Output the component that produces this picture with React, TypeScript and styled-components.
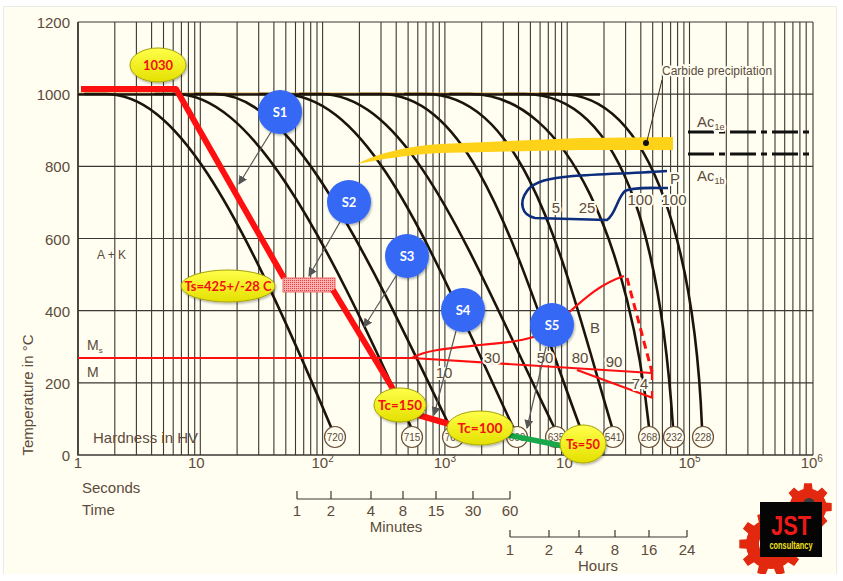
import React from 'react'
import styled, { createGlobalStyle } from 'styled-components'

type Pt = [number, number]

const CREAM = '#fffef1'
const INK = '#5c4b3c'

const GlobalStyle = createGlobalStyle`
    html, body {
        margin: 0;
        padding: 0;
        background: #ffffff;
    }
`

const Frame = styled.div`
    position: relative;
    width: 832px;
    height: 567px;
    margin: 7px 0 0 4px;
    background: ${CREAM};
    box-shadow: 0 0 0 1px #ebebe6;
    overflow: visible;
`

const Chart = styled.svg`
    display: block;
`

const LogoBadge = styled.svg`
    position: absolute;
    left: 732px;
    top: 471px;
    overflow: visible;
`

const Txt = styled.text<{ $size?: number; $anchor?: string }>`
    font-family: "Liberation Sans", Arial, Helvetica, sans-serif;
    font-size: ${p => p.$size ?? 15}px;
    fill: ${INK};
    text-anchor: ${p => p.$anchor ?? 'start'};
`

const Halo = styled(Txt)`
    paint-order: stroke;
    stroke: ${CREAM};
    stroke-width: 4px;
    stroke-linejoin: round;
`

const Tag = styled.text`
    font-family: "Lato", "Liberation Sans", Arial, sans-serif;
    font-weight: 700;
    font-size: 14px;
    fill: #f21010;
    text-anchor: middle;
`

const BubbleLabel = styled.text`
    font-family: "Lato", "Liberation Sans", Arial, sans-serif;
    font-weight: 700;
    font-size: 13px;
    fill: #ffffff;
    text-anchor: middle;
`

const Grid = styled.path<{ $w?: number }>`
    fill: none;
    stroke: #3b3833;
    stroke-width: ${p => p.$w ?? 1}px;
`

const Curve = styled.path`
    fill: none;
    stroke: #1c140b;
    stroke-width: 2.6px;
    stroke-linecap: round;
`

const RedLine = styled.path<{ $w?: number; $dash?: string }>`
    fill: none;
    stroke: #ff1010;
    stroke-width: ${p => p.$w ?? 2.2}px;
    stroke-dasharray: ${p => p.$dash ?? 'none'};
    stroke-linejoin: round;
`

const Pointer = styled.path`
    fill: none;
    stroke: #58585a;
    stroke-width: 1.2px;
`

const Oval = styled.ellipse`
    fill: url(#yellowFill);
    stroke: #a6a30e;
    stroke-width: 1px;
    filter: url(#softShadow);
`

const Bubble = styled.circle`
    fill: #3468f5;
    filter: url(#softShadow);
`

const HvRing = styled.circle`
    fill: ${CREAM};
    stroke: #6a5138;
    stroke-width: 1.2px;
`

const X0 = 78
const DEC = 122.3
const lx = (t: number) => X0 + Math.log10(t) * DEC
const ty = (T: number) => 455 - T * 0.3608

// each cooling curve: leaves the 1000 line at x0, handles at x1 / (x2, y2), lands on its ring at xe
const coolingCurves: [number, number, number, number, number][] = [
    [105, 175, 234, 197, 331],
    [175, 250, 320, 225, 411],
    [215, 290, 360, 240, 450],
    [280, 370, 428, 245, 513],
    [320, 410, 470, 255, 554],
    [380, 475, 518, 260, 580],
    [425, 528, 565, 270, 612],
    [470, 570, 630, 250, 649],
    [525, 630, 662, 265, 673],
    [560, 655, 695, 260, 702],
]

const hardness: [number, string][] = [
    [335, '720'], [412, '715'], [453, '705'], [517, '660'], [556, '635'],
    [580, ''], [613, '541'], [649, '268'], [674, '232'], [703, '228'],
]

const zoneLabels: { x: number; y: number; t: string }[] = [
    { x: 556, y: 213, t: '5' },
    { x: 587, y: 213, t: '25' },
    { x: 640, y: 205, t: '100' },
    { x: 674, y: 205, t: '100' },
    { x: 675, y: 184, t: 'P' },
    { x: 595, y: 333, t: 'B' },
    { x: 492, y: 363, t: '30' },
    { x: 545, y: 363, t: '50' },
    { x: 580, y: 363, t: '80' },
    { x: 614, y: 367, t: '90' },
    { x: 444, y: 378, t: '10' },
    { x: 640, y: 389, t: '74' },
]

const callouts = [
    { cx: 158, cy: 65, rx: 28, ry: 17, label: '1030', len: 30 },
    { cx: 228, cy: 286, rx: 47, ry: 16, label: 'Ts=425+/-28 C', len: 87 },
    { cx: 400, cy: 405, rx: 26, ry: 17, label: 'Tc=150', len: 44 },
    { cx: 480, cy: 428, rx: 33, ry: 17, label: 'Tc=100', len: 45 },
    { cx: 583, cy: 444, rx: 23, ry: 19, label: 'Ts=50', len: 34 },
]

const bubbles: [number, number, string][] = [
    [280, 112, 'S1'], [349, 202, 'S2'], [407, 256, 'S3'], [463, 310, 'S4'], [552, 325, 'S5'],
]

const pointers = [
    'M271,132 L239,184',
    'M340,222 L309,276',
    'M396,276 L364,327',
    'M456,331 L434,415',
    'M546,347 L527,428',
]

const minuteTicks: [number, string][] = [
    [297, '1'], [331, '2'], [371, '4'], [403, '8'], [436, '15'], [473, '30'], [510, '60'],
]
const hourTicks: [number, string][] = [
    [510, '1'], [549, '2'], [579, '4'], [615, '8'], [649, '16'], [687, '24'],
]

const gearPath = (cx: number, cy: number, rt: number, rr: number, n: number, hole: number) => {
    const h = Math.PI / n
    const pts: Pt[] = []
    for (let i = 0; i < n; i++) {
        const a = (i / n) * Math.PI * 2
        const seq: [number, number][] = [
            [a - 0.62 * h, rr], [a - 0.42 * h, rt], [a + 0.42 * h, rt], [a + 0.62 * h, rr], [a + h, rr],
        ]
        seq.forEach(([ang, r]) => pts.push([cx + r * Math.cos(ang), cy + r * Math.sin(ang)]))
    }
    const outer = 'M' + pts.map(p => `${p[0].toFixed(1)},${p[1].toFixed(1)}`).join(' L') + ' Z'
    const inner = `M${cx + hole},${cy} A${hole},${hole} 0 1 0 ${cx - hole},${cy} A${hole},${hole} 0 1 0 ${cx + hole},${cy} Z`
    return outer + ' ' + inner
}

const GridLines = () => {
    let vertical = ''
    for (let d = 0; d < 6; d++) {
        for (let m = 1; m < 10; m++) {
            const x = lx(m * Math.pow(10, d))
            vertical += `M${x.toFixed(1)},22 V455 `
        }
    }
    vertical += 'M813,22 V455'
    let horizontal = ''
    for (let T = 200; T <= 1200; T += 200) {
        horizontal += `M78,${ty(T).toFixed(1)} H813 `
    }
    return (
        <g>
            <Grid d={vertical} $w={1.1} />
            <Grid d={horizontal} $w={1.2} />
            <Grid d="M78,22 V455 H813" $w={1.6} />
        </g>
    )
}

const Axes = () => (
    <g>
        {[0, 200, 400, 600, 800, 1000, 1200].map(T => (
            <Txt key={T} x={70} y={ty(T) + 6} $anchor="end">{T}</Txt>
        ))}
        <Txt x={33} y={395} $anchor="middle" transform="rotate(-90 33 395)">Temperature in °C</Txt>

        <Txt x={78} y={468} $anchor="middle">1</Txt>
        <Txt x={lx(10) - 4} y={468} $anchor="middle">10</Txt>
        {[2, 3, 4, 5, 6].map(n => (
            <Txt key={n} x={lx(Math.pow(10, n))} y={468} $anchor="middle">
                10<tspan fontSize={10} dy={-6}>{n}</tspan>
            </Txt>
        ))}

        <Txt x={82} y={493}>Seconds</Txt>
        <Txt x={82} y={515}>Time</Txt>

        <Grid d={'M297,499 H510 ' + minuteTicks.map(([x]) => `M${x},491 V499`).join(' ')} $w={1.2} />
        {minuteTicks.map(([x, t]) => (
            <Txt key={'m' + t} x={x} y={516} $anchor="middle">{t}</Txt>
        ))}
        <Txt x={396} y={532} $anchor="middle">Minutes</Txt>

        <Grid d={'M510,537 H687 ' + hourTicks.map(([x]) => `M${x},530 V537`).join(' ')} $w={1.2} />
        {hourTicks.map(([x, t]) => (
            <Txt key={'h' + t} x={x} y={555} $anchor="middle">{t}</Txt>
        ))}
        <Txt x={598} y={571} $anchor="middle">Hours</Txt>
    </g>
)

const Transformations = () => (
    <g>
        <path d="M78,94.5 H600" stroke="#1c140b" strokeWidth={2.6} fill="none" />
        <path d="M78,92.6 H560" stroke="#d8901e" strokeWidth={0.8} opacity={0.6} fill="none" />
        {coolingCurves.map(([x0, x1, x2, y2, xe], i) => (
            <Curve key={i} d={`M${x0 - 20},94 L${x0},94 C${x1},94 ${x2},${y2} ${xe},427`} />
        ))}

        <path
            d="M357,164 C378,153 408,146 440,144 L580,138 L673,137 L673,150 L580,150 L440,153 C408,155 382,159 357,164 Z"
            fill="#ffd21a"
        />

        <path d="M688,132 H813 M688,154 H813" stroke="#111" strokeWidth={3} strokeDasharray="26 5 6 5" fill="none" />
        <Halo x={697} y={127}>Ac<tspan fontSize={9} dy={3}>1e</tspan></Halo>
        <Halo x={697} y={181}>Ac<tspan fontSize={9} dy={3}>1b</tspan></Halo>

        <path d="M662,80 L647,141" stroke="#3a2a1a" strokeWidth={1} fill="none" />
        <circle cx={646} cy={143} r={3} fill="#111" />
        <Halo x={662} y={75} $size={12}>Carbide precipitation</Halo>

        <path
            d="M667,171 C640,173 600,174 573,176 C550,178 534,181 527,191 C519,202 521,215 535,218 L607,220 C616,214 617,198 625,191 C632,187 650,188 668,188"
            stroke="#0c2c7c"
            strokeWidth={2.6}
            fill="none"
        />

        <RedLine d="M78,358 L412,358" />
        <RedLine d="M412,358 C425,350 450,348 480,345 C505,343 525,341 545,333" />
        <RedLine d="M566,315 C585,298 600,284 624,276" />
        <RedLine d="M412,358 L652,373 M577,370 L653,398 M652,373 V380 M652,391 V398" />
        <RedLine d="M627,278 L652,372" $w={3} $dash="8 5" />

        {zoneLabels.map(l => (
            <Halo key={l.t + l.x} x={l.x} y={l.y} $anchor="middle">{l.t}</Halo>
        ))}

        <Txt x={97} y={259} $size={12}>A + K</Txt>
        <Txt x={87} y={350} $size={14}>M<tspan fontSize={8} dy={3}>s</tspan></Txt>
        <Txt x={87} y={377} $size={14}>M</Txt>
        <Txt x={93} y={443}>Hardness in HV</Txt>

        {hardness.map(([x, t]) => (
            <g key={x}>
                <HvRing cx={x} cy={437} r={10.5} />
                {t && <Txt x={x} y={440.5} $size={10} $anchor="middle">{t}</Txt>}
            </g>
        ))}
    </g>
)

const Process = () => (
    <g>
        <RedLine d="M81,89 L176,89 L284,278" $w={6} />
        <rect x={283} y={278} width={52} height={14} fill="url(#hatch)" stroke="#f06868" strokeWidth={1} />
        <RedLine d="M333,290 L396,394" $w={6} />
        <RedLine d="M418,415 L456,426" $w={6} />
        <path d="M503,434 L563,446" stroke="#18a84a" strokeWidth={5.5} fill="none" />

        {callouts.map(c => (
            <g key={c.label}>
                <Oval cx={c.cx} cy={c.cy} rx={c.rx} ry={c.ry} />
                <Tag x={c.cx} y={c.cy + 5} textLength={c.len} lengthAdjust="spacingAndGlyphs">{c.label}</Tag>
            </g>
        ))}

        {pointers.map(p => (
            <Pointer key={p} d={p} markerEnd="url(#arrowHead)" />
        ))}

        {bubbles.map(([x, y, t]) => (
            <g key={t}>
                <Bubble cx={x} cy={y} r={22} />
                <BubbleLabel x={x} y={y + 5}>{t}</BubbleLabel>
            </g>
        ))}
    </g>
)

const Logo = () => (
    <LogoBadge width={100} height={100} viewBox="736 478 100 100">
        <path d={gearPath(808, 507, 24, 18.5, 8, 6)} fill="#e2290f" fillRule="evenodd" />
        <circle cx={809} cy={504} r={6} fill="#3a3a3a" />
        <path d={gearPath(771, 544, 32, 25, 10, 12)} fill="#e2290f" fillRule="evenodd" />
        <rect x={760} y={502} width={62} height={55} fill="#050505" />
        <text
            x={791}
            y={535}
            fontFamily='"Liberation Sans", Arial, sans-serif'
            fontWeight={700}
            fontSize={28}
            fill="#ee1a1a"
            textAnchor="middle"
            textLength={40}
            lengthAdjust="spacingAndGlyphs"
        >
            JST
        </text>
        <text
            x={791}
            y={549}
            fontFamily='"Liberation Sans", Arial, sans-serif'
            fontWeight={700}
            fontSize={10}
            fill="#f4e21c"
            textAnchor="middle"
            textLength={43}
            lengthAdjust="spacingAndGlyphs"
        >
            consultancy
        </text>
    </LogoBadge>
)

const App = () => {
    return (
        <>
            <GlobalStyle />
            <Frame>
                <Chart width={832} height={567} viewBox="4 7 832 567">
                    <defs>
                        <linearGradient id="yellowFill" x1="0" y1="0" x2="0" y2="1">
                            <stop offset="0" stopColor="#ffff4a" />
                            <stop offset="1" stopColor="#e4e000" />
                        </linearGradient>
                        <filter id="softShadow" x="-20%" y="-20%" width="150%" height="150%">
                            <feDropShadow dx="1" dy="1.5" stdDeviation="1" floodColor="#000" floodOpacity="0.3" />
                        </filter>
                        <pattern id="hatch" width="2" height="2" patternUnits="userSpaceOnUse">
                            <rect width="2" height="2" fill="#f8b0b0" />
                            <rect width="1" height="1" fill="#ee4040" />
                        </pattern>
                        <marker id="arrowHead" markerWidth="9" markerHeight="9" refX="8" refY="4.5" orient="auto" markerUnits="userSpaceOnUse">
                            <path d="M0,0 L9,4.5 L0,9 z" fill="#555" />
                        </marker>
                    </defs>
                    <GridLines />
                    <Axes />
                    <Transformations />
                    <Process />
                </Chart>
                <Logo />
            </Frame>
        </>
    )
}

export default App
